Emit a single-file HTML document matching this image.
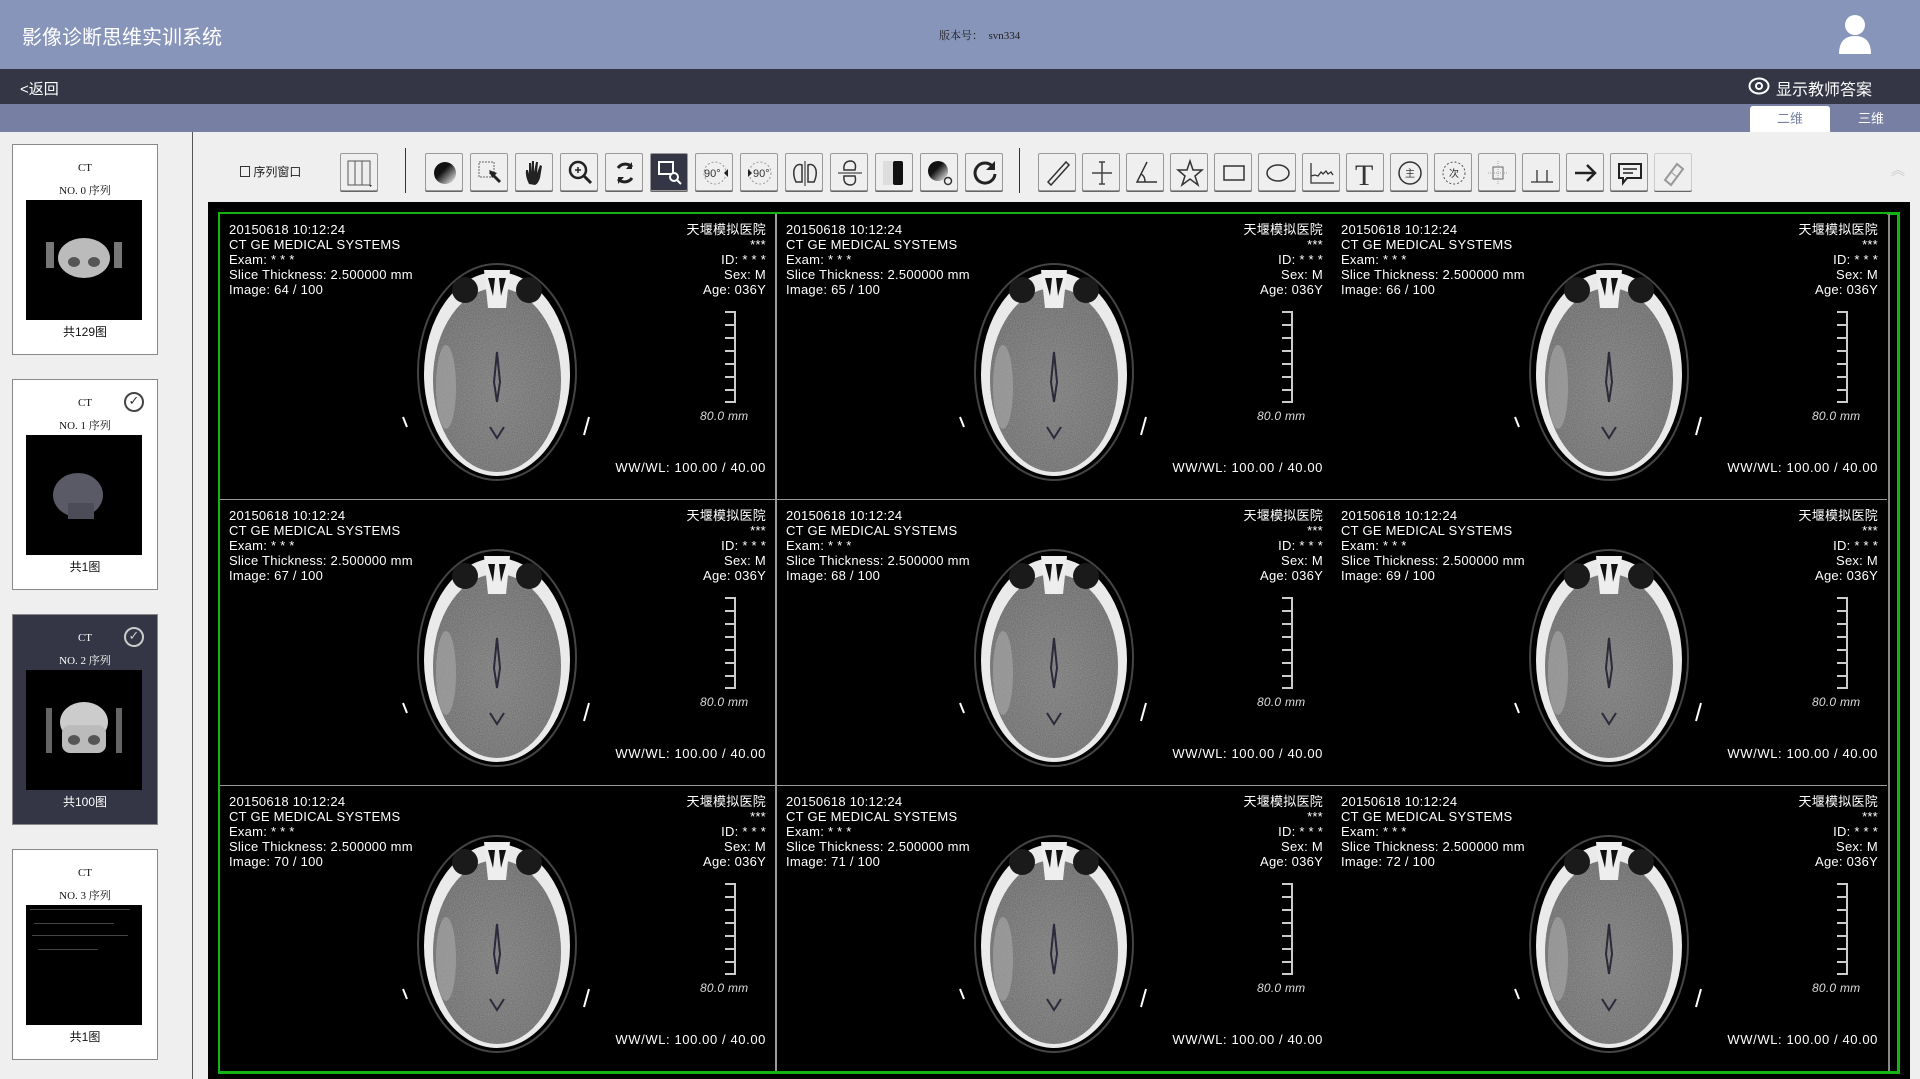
<!DOCTYPE html>
<html><head><meta charset="utf-8">
<style>
*{margin:0;padding:0;box-sizing:border-box}
body{width:1920px;height:1079px;overflow:hidden;background:#efefef;font-family:"Liberation Sans","Noto Sans CJK SC",sans-serif;position:relative}
.hdr{position:absolute;left:0;top:0;width:1920px;height:69px;background:#8895bb}
.title{position:absolute;left:22px;top:21px;color:#fff;font-size:20px}
.ver{position:absolute;left:939px;top:27px;font-size:11px;color:#222;font-family:"Liberation Serif","Noto Serif CJK SC",serif}
.bar{position:absolute;left:0;top:69px;width:1920px;height:35px;background:#343645;color:#fff}
.tabs{position:absolute;left:0;top:104px;width:1920px;height:28px;background:#7780a3}
.tab{position:absolute;top:2px;height:26px;width:80px;text-align:center;line-height:26px;font-size:13px;color:#fff}
.side{position:absolute;left:0;top:132px;width:193px;height:947px;border-right:1px solid #555}
.card{position:absolute;left:12px;width:146px;height:211px;background:#fff;border:1px solid #888;text-align:center;font-family:"Liberation Serif","Noto Serif CJK SC",serif;font-size:11px;color:#111}
.card.sel{background:#343645;color:#fff}
.card .ct{position:absolute;top:17px;left:0;width:100%}
.card .no{position:absolute;top:37px;left:0;width:100%}
.card .th{position:absolute;left:13px;top:55px;width:116px;height:120px;background:#000;overflow:hidden}
.card .cnt{position:absolute;top:178px;left:0;width:100%;font-size:12px;font-family:"Liberation Sans","Noto Sans CJK SC",sans-serif}
.chk{position:absolute;right:13px;top:12px;width:20px;height:20px;border:2px solid #444;border-radius:50%;font-size:13px;line-height:16px;text-align:center;font-family:"DejaVu Sans",sans-serif;color:#333}
.sel .chk{border-color:#ccc;color:#ccc}
.tb{position:absolute;top:153px;width:38px;height:38px;background:#efefef;border:1px solid #999;border-radius:2px;box-shadow:0 1px 0 #666}
.tb svg{position:absolute;left:4px;top:4px}
.view{position:absolute;left:208px;top:202px;width:1702px;height:877px;background:#000}
.grid{position:absolute;left:218px;top:212px;width:1682px;height:862px;border:3px solid #12b312}
.cell{position:absolute;width:555px;height:285px;background:#000;color:#fff;font-size:13px;overflow:hidden;letter-spacing:0.25px}
.cell .l{position:absolute;left:9px;top:8px;line-height:15px}
.cell .r{position:absolute;right:9px;top:8px;line-height:15px;text-align:right}
.cell .ru{position:absolute;left:505px;top:97px}
.cell .mm{position:absolute;left:480px;top:195px;font-style:italic;font-size:12px;color:#ddd}
.cell .ww{position:absolute;right:9px;top:246px;letter-spacing:0.6px}
.cell svg.b{position:absolute;left:182px;top:38px}
</style></head><body>
<svg width="0" height="0" style="position:absolute">
<defs>
<filter id="n"><feTurbulence type="fractalNoise" baseFrequency="1.2" numOctaves="1" result="t"/><feColorMatrix in="t" type="matrix" values="0 0 0 0 0.45 0 0 0 0 0.45 0 0 0 0 0.45 0 0 0 1.6 -0.3"/><feComposite in2="SourceGraphic" operator="in"/></filter>
<radialGradient id="g" cx="50%" cy="55%" r="55%"><stop offset="0" stop-color="#727272"/><stop offset="1" stop-color="#606060"/></radialGradient>
<symbol id="brain" viewBox="0 0 190 230">
<ellipse cx="95" cy="120" rx="79" ry="108" fill="none" stroke="#444" stroke-width="2"/>
<ellipse cx="95" cy="122" rx="73" ry="102" fill="#eaeaea"/>
<ellipse cx="95" cy="128" rx="64" ry="92" fill="url(#g)"/>
<ellipse cx="95" cy="128" rx="64" ry="92" fill="#888" filter="url(#n)" opacity=".6"/>
<ellipse cx="44" cy="135" rx="10" ry="42" fill="#aaa" opacity=".6"/>
<ellipse cx="63" cy="38" rx="13" ry="13" fill="#1a1a1a"/>
<ellipse cx="127" cy="38" rx="13" ry="13" fill="#1a1a1a"/>
<path d="M82 18 L108 18 L104 56 L86 56Z" fill="#eee"/>
<path d="M86 26 L93 26 L91 44Z M97 26 L104 26 L99 44Z" fill="#111"/>
<path d="M95 100 L92 130 L95 150 L98 130Z M88 175 L95 186 L102 175" fill="none" stroke="#2a2a3a" stroke-width="2"/>
<path d="M1 165 l4 10 M187 165 l-5 18" stroke="#fff" stroke-width="2"/>
</symbol>
<symbol id="ruler" viewBox="0 0 14 92"><path d="M0 1H10V91H0 M0 14H10M0 27H10M0 40H10M0 53H10M0 66H10M0 79H10" fill="none" stroke="#ccc" stroke-width="2"/></symbol>
</defs></svg>

<div class="hdr">
<div class="title">影像诊断思维实训系统</div>
<div class="ver">版本号：&nbsp; svn334</div>
<svg style="position:absolute;left:1838px;top:14px" width="34" height="40"><circle cx="17" cy="11" r="10" fill="#fff"/><path d="M1 40 Q1 22 17 22 Q33 22 33 40Z" fill="#fff"/></svg>
</div>
<div class="bar">
<div style="position:absolute;left:20px;top:9px;font-size:15px">&lt;返回</div>
<svg style="position:absolute;left:1748px;top:8px" width="22" height="18"><ellipse cx="11" cy="9" rx="9.5" ry="7.5" fill="none" stroke="#fff" stroke-width="2"/><circle cx="11" cy="9" r="3" fill="none" stroke="#fff" stroke-width="2"/></svg>
<div style="position:absolute;left:1776px;top:7px;font-size:16px">显示教师答案</div>
</div>
<div class="tabs">
<div class="tab" style="left:1750px;background:#fff;color:#7780a3;border-radius:3px 3px 0 0">二维</div>
<div class="tab" style="left:1831px">三维</div>
</div>

<div class="side">
<div class="card" style="top:12px"><div class="ct">CT</div><div class="no">NO. 0 序列</div><div class="th"><svg width="116" height="120"><ellipse cx="58" cy="58" rx="26" ry="20" fill="#bbb"/><rect x="20" y="42" width="8" height="26" fill="#777"/><rect x="88" y="42" width="8" height="26" fill="#777"/><ellipse cx="48" cy="62" rx="6" ry="5" fill="#555"/><ellipse cx="68" cy="62" rx="6" ry="5" fill="#555"/></svg></div><div class="cnt">共129图</div></div>
<div class="card" style="top:247px"><div class="ct">CT</div><div class="no">NO. 1 序列</div><div class="chk">✓</div><div class="th"><svg width="116" height="120"><ellipse cx="52" cy="60" rx="25" ry="22" fill="#5a5a66"/><rect x="42" y="68" width="26" height="16" fill="#4c4c58"/></svg></div><div class="cnt">共1图</div></div>
<div class="card sel" style="top:482px"><div class="ct">CT</div><div class="no">NO. 2 序列</div><div class="chk">✓</div><div class="th"><svg width="116" height="120"><rect x="20" y="38" width="6" height="45" fill="#666"/><rect x="90" y="38" width="6" height="45" fill="#666"/><ellipse cx="58" cy="52" rx="24" ry="20" fill="#ccc"/><rect x="36" y="55" width="44" height="28" rx="8" fill="#bbb"/><ellipse cx="48" cy="70" rx="6" ry="5" fill="#555"/><ellipse cx="68" cy="70" rx="6" ry="5" fill="#555"/></svg></div><div class="cnt">共100图</div></div>
<div class="card" style="top:717px"><div class="ct">CT</div><div class="no">NO. 3 序列</div><div class="th"><svg width="116" height="120"><g fill="#444"><rect x="4" y="4" width="100" height="1"/><rect x="8" y="18" width="80" height="1"/><rect x="6" y="30" width="96" height="1"/><rect x="12" y="44" width="60" height="1"/></g></svg></div><div class="cnt">共1图</div></div>
</div>

<div style="position:absolute;left:240px;top:163px;font-size:12px;color:#222"><span style="display:inline-block;width:10px;height:11px;border:1px solid #333;vertical-align:-1px"></span> 序列窗口</div>
<div class="tb" style="left:340px"><svg width="30" height="30"><rect x="3" y="3" width="22" height="24" fill="#eee" stroke="#555"/><path d="M10 3V27M17 3V27" stroke="#555"/><path d="M24 27l3 0-1.5 2z" fill="#333"/></svg></div>
<div style="position:absolute;left:405px;top:148px;width:1px;height:45px;background:#333"></div>
<div class="tb" style="left:425px"><svg width="30" height="30"><defs><linearGradient id="h" x1="0" y1="0" x2="1" y2="1"><stop offset=".4" stop-color="#111"/><stop offset="1" stop-color="#fff"/></linearGradient></defs><circle cx="15" cy="15" r="11" fill="url(#h)"/></svg></div>
<div class="tb" style="left:470px"><svg width="30" height="30"><rect x="4" y="4" width="15" height="15" fill="none" stroke="#666" stroke-dasharray="2 1"/><path d="M15 14l10 10" stroke="#222" stroke-width="3"/><path d="M14 12l8 3-5 5z" fill="#222"/></svg></div>
<div class="tb" style="left:515px"><svg width="30" height="30"><path d="M9 26 Q5 18 6 12 L8 12 L9 16 L9 5 L11 5 L11 14 L12 3 L14 3 L14 14 L16 4 L18 4 L17 15 L20 7 L22 8 L20 20 Q18 26 15 27Z" fill="#222"/></svg></div>
<div class="tb" style="left:560px"><svg width="30" height="30"><circle cx="13" cy="12" r="8" fill="none" stroke="#222" stroke-width="2.5"/><path d="M19 18l7 7" stroke="#222" stroke-width="3"/><path d="M10 12h6M13 9v6" stroke="#222" stroke-width="1.5"/></svg></div>
<div class="tb" style="left:605px"><svg width="30" height="30"><path d="M22 9A9 9 0 0 0 8 10M8 21A9 9 0 0 0 22 20" fill="none" stroke="#222" stroke-width="3"/><path d="M22 4v7h-6zM8 26v-7h6z" fill="#222"/></svg></div>
<div class="tb" style="left:650px;background:#343645"><svg width="30" height="30"><path d="M4 4h14v12H4z" fill="none" stroke="#fff" stroke-width="2"/><circle cx="19" cy="19" r="4" fill="#343645" stroke="#fff" stroke-width="2"/><path d="M22 22l4 4" stroke="#fff" stroke-width="2"/></svg></div>
<div class="tb" style="left:695px"><svg width="30" height="30"><circle cx="15" cy="15" r="11" fill="none" stroke="#999" stroke-dasharray="2 2"/><text x="4" y="19" font-size="11" fill="#333">90°</text><path d="M28 11v8l-4-4z" fill="#222"/></svg></div>
<div class="tb" style="left:740px"><svg width="30" height="30"><circle cx="15" cy="15" r="11" fill="none" stroke="#999" stroke-dasharray="2 2"/><text x="8" y="19" font-size="11" fill="#333">90°</text><path d="M3 11v8l4-4z" fill="#222"/></svg></div>
<div class="tb" style="left:785px"><svg width="30" height="30"><path d="M15 3V28" stroke="#222"/><path d="M12 24 L6 24 Q3 18 4 12 Q6 5 12 7Z M18 24 L24 24 Q27 18 26 12 Q24 5 18 7Z" fill="none" stroke="#333" stroke-width="1.5"/></svg></div>
<div class="tb" style="left:830px"><svg width="30" height="30"><path d="M3 15H27" stroke="#222"/><path d="M9 12 Q8 3 16 3 Q22 4 20 12Z M9 18 Q8 27 16 27 Q22 26 20 18Z" fill="none" stroke="#333" stroke-width="1.5"/></svg></div>
<div class="tb" style="left:875px"><svg width="30" height="30"><rect x="3" y="3" width="10" height="24" fill="#ddd"/><rect x="13" y="3" width="10" height="24" rx="2" fill="#111"/></svg></div>
<div class="tb" style="left:920px"><svg width="30" height="30"><circle cx="13" cy="13" r="10" fill="url(#h)"/><circle cx="23" cy="23" r="3.5" fill="none" stroke="#333" stroke-width="1.5"/></svg></div>
<div class="tb" style="left:965px"><svg width="30" height="30"><path d="M23 9A10 10 0 1 0 25 16" fill="none" stroke="#222" stroke-width="3"/><path d="M25 3v9h-9z" fill="#222"/></svg></div>
<div style="position:absolute;left:1019px;top:148px;width:1px;height:45px;background:#333"></div>
<div class="tb" style="left:1038px"><svg width="30" height="30"><path d="M5 24L23 4l3 3L8 27z" fill="none" stroke="#333" stroke-width="1.5"/></svg></div>
<div class="tb" style="left:1082px"><svg width="30" height="30"><path d="M15 4V26M5 15H25M12 4h6M12 26h6" stroke="#444" stroke-width="1.5"/></svg></div>
<div class="tb" style="left:1126px"><svg width="30" height="30"><path d="M16 4L6 24H26M10 16q4 2 4 8" fill="none" stroke="#333" stroke-width="1.5"/></svg></div>
<div class="tb" style="left:1170px"><svg width="30" height="30"><path d="M15 3l3 9h9l-7 6 3 9-8-6-8 6 3-9-7-6h9z" fill="none" stroke="#333" stroke-width="1.5"/></svg></div>
<div class="tb" style="left:1214px"><svg width="30" height="30"><rect x="5" y="8" width="20" height="14" fill="none" stroke="#333" stroke-width="1.5"/></svg></div>
<div class="tb" style="left:1258px"><svg width="30" height="30"><ellipse cx="15" cy="15" rx="11" ry="8" fill="none" stroke="#333" stroke-width="1.5"/></svg></div>
<div class="tb" style="left:1302px"><svg width="30" height="30"><path d="M4 5V25H27M4 18l4-1 3 1 3-4 2 2 3-3 2 3 3-2 2 3" fill="none" stroke="#333" stroke-width="1.3"/></svg></div>
<div class="tb" style="left:1346px"><svg width="30" height="30"><text x="4" y="27" font-size="30" font-family="Liberation Serif" fill="#333">T</text></svg></div>
<div class="tb" style="left:1390px"><svg width="30" height="30"><circle cx="15" cy="15" r="11" fill="none" stroke="#333" stroke-width="1.5"/><text x="10" y="19" font-size="10" fill="#333">主</text></svg></div>
<div class="tb" style="left:1434px"><svg width="30" height="30"><circle cx="15" cy="15" r="11" fill="none" stroke="#555" stroke-dasharray="2 2"/><text x="10" y="19" font-size="10" fill="#333">次</text></svg></div>
<div class="tb" style="left:1478px"><svg width="30" height="30"><rect x="10" y="9" width="10" height="12" fill="none" stroke="#666"/><path d="M15 3V27M5 15H25" stroke="#aaa" stroke-dasharray="1 1"/></svg></div>
<div class="tb" style="left:1522px"><svg width="30" height="30"><path d="M4 24H26M10 24V12M20 24V12" stroke="#333" stroke-width="1.3"/></svg></div>
<div class="tb" style="left:1566px"><svg width="30" height="30"><path d="M4 15H24M16 7l8 8-8 8" fill="none" stroke="#222" stroke-width="2.5"/></svg></div>
<div class="tb" style="left:1610px"><svg width="30" height="30"><path d="M4 6H26V20H12L8 25V20H4Z" fill="none" stroke="#222" stroke-width="2"/><path d="M8 11H22M8 15H18" stroke="#222" stroke-width="1.5"/></svg></div>
<div class="tb" style="left:1654px;border-color:#ccc"><svg width="30" height="30"><path d="M6 22L18 6l6 5-12 16z" fill="none" stroke="#999" stroke-width="2"/><path d="M12 14l6 5" stroke="#999"/></svg></div>
<div style="position:absolute;left:1891px;top:160px;color:#ccc;font-size:14px">︽</div>

<div class="view"></div>
<div class="grid"></div>
<div style="position:absolute;left:775px;top:214px;width:2px;height:857px;background:#999"></div>
<div style="position:absolute;left:1330px;top:214px;width:2px;height:857px;background:#999"></div>
<div style="position:absolute;left:220px;top:498px;width:1667px;height:2px;background:#999"></div>
<div style="position:absolute;left:220px;top:784px;width:1667px;height:2px;background:#999"></div>
<div style="position:absolute;left:1888px;top:214px;width:2px;height:857px;background:#888"></div>

<div class="cell" style="left:220px;top:214px"><svg class="b" width="190" height="230"><use href="#brain"/></svg><div class="l">20150618 10:12:24<br>CT GE MEDICAL SYSTEMS<br>Exam: * * *<br>Slice Thickness: 2.500000 mm<br>Image: 64 / 100</div><div class="r">天堰模拟医院<br>***<br>ID: * * *<br>Sex: M<br>Age: 036Y</div><svg class="ru" width="14" height="92"><use href="#ruler"/></svg><div class="mm">80.0 mm</div><div class="ww">WW/WL: 100.00 / 40.00</div></div>
<div class="cell" style="left:777px;top:214px"><svg class="b" width="190" height="230"><use href="#brain"/></svg><div class="l">20150618 10:12:24<br>CT GE MEDICAL SYSTEMS<br>Exam: * * *<br>Slice Thickness: 2.500000 mm<br>Image: 65 / 100</div><div class="r">天堰模拟医院<br>***<br>ID: * * *<br>Sex: M<br>Age: 036Y</div><svg class="ru" width="14" height="92"><use href="#ruler"/></svg><div class="mm">80.0 mm</div><div class="ww">WW/WL: 100.00 / 40.00</div></div>
<div class="cell" style="left:1332px;top:214px"><svg class="b" width="190" height="230"><use href="#brain"/></svg><div class="l">20150618 10:12:24<br>CT GE MEDICAL SYSTEMS<br>Exam: * * *<br>Slice Thickness: 2.500000 mm<br>Image: 66 / 100</div><div class="r">天堰模拟医院<br>***<br>ID: * * *<br>Sex: M<br>Age: 036Y</div><svg class="ru" width="14" height="92"><use href="#ruler"/></svg><div class="mm">80.0 mm</div><div class="ww">WW/WL: 100.00 / 40.00</div></div>
<div class="cell" style="left:220px;top:500px"><svg class="b" width="190" height="230"><use href="#brain"/></svg><div class="l">20150618 10:12:24<br>CT GE MEDICAL SYSTEMS<br>Exam: * * *<br>Slice Thickness: 2.500000 mm<br>Image: 67 / 100</div><div class="r">天堰模拟医院<br>***<br>ID: * * *<br>Sex: M<br>Age: 036Y</div><svg class="ru" width="14" height="92"><use href="#ruler"/></svg><div class="mm">80.0 mm</div><div class="ww">WW/WL: 100.00 / 40.00</div></div>
<div class="cell" style="left:777px;top:500px"><svg class="b" width="190" height="230"><use href="#brain"/></svg><div class="l">20150618 10:12:24<br>CT GE MEDICAL SYSTEMS<br>Exam: * * *<br>Slice Thickness: 2.500000 mm<br>Image: 68 / 100</div><div class="r">天堰模拟医院<br>***<br>ID: * * *<br>Sex: M<br>Age: 036Y</div><svg class="ru" width="14" height="92"><use href="#ruler"/></svg><div class="mm">80.0 mm</div><div class="ww">WW/WL: 100.00 / 40.00</div></div>
<div class="cell" style="left:1332px;top:500px"><svg class="b" width="190" height="230"><use href="#brain"/></svg><div class="l">20150618 10:12:24<br>CT GE MEDICAL SYSTEMS<br>Exam: * * *<br>Slice Thickness: 2.500000 mm<br>Image: 69 / 100</div><div class="r">天堰模拟医院<br>***<br>ID: * * *<br>Sex: M<br>Age: 036Y</div><svg class="ru" width="14" height="92"><use href="#ruler"/></svg><div class="mm">80.0 mm</div><div class="ww">WW/WL: 100.00 / 40.00</div></div>
<div class="cell" style="left:220px;top:786px"><svg class="b" width="190" height="230"><use href="#brain"/></svg><div class="l">20150618 10:12:24<br>CT GE MEDICAL SYSTEMS<br>Exam: * * *<br>Slice Thickness: 2.500000 mm<br>Image: 70 / 100</div><div class="r">天堰模拟医院<br>***<br>ID: * * *<br>Sex: M<br>Age: 036Y</div><svg class="ru" width="14" height="92"><use href="#ruler"/></svg><div class="mm">80.0 mm</div><div class="ww">WW/WL: 100.00 / 40.00</div></div>
<div class="cell" style="left:777px;top:786px"><svg class="b" width="190" height="230"><use href="#brain"/></svg><div class="l">20150618 10:12:24<br>CT GE MEDICAL SYSTEMS<br>Exam: * * *<br>Slice Thickness: 2.500000 mm<br>Image: 71 / 100</div><div class="r">天堰模拟医院<br>***<br>ID: * * *<br>Sex: M<br>Age: 036Y</div><svg class="ru" width="14" height="92"><use href="#ruler"/></svg><div class="mm">80.0 mm</div><div class="ww">WW/WL: 100.00 / 40.00</div></div>
<div class="cell" style="left:1332px;top:786px"><svg class="b" width="190" height="230"><use href="#brain"/></svg><div class="l">20150618 10:12:24<br>CT GE MEDICAL SYSTEMS<br>Exam: * * *<br>Slice Thickness: 2.500000 mm<br>Image: 72 / 100</div><div class="r">天堰模拟医院<br>***<br>ID: * * *<br>Sex: M<br>Age: 036Y</div><svg class="ru" width="14" height="92"><use href="#ruler"/></svg><div class="mm">80.0 mm</div><div class="ww">WW/WL: 100.00 / 40.00</div></div>
</body></html>
